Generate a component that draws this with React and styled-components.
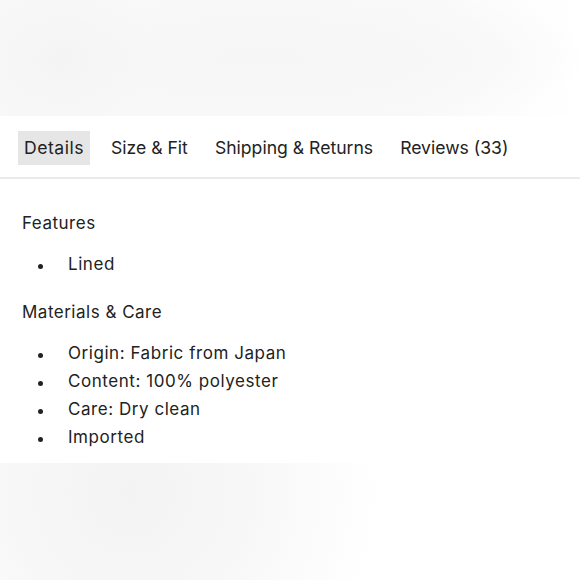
import React, { useState } from 'react'
import styled, { createGlobalStyle } from 'styled-components'

const GlobalStyle = createGlobalStyle`
  html, body {
    margin: 0;
    padding: 0;
    background: #ffffff;
  }
  body {
    font-family: Inter, "Liberation Sans", sans-serif;
    color: #222222;
  }
`

const Page = styled.div`
  width: 580px;
  height: 580px;
  display: flex;
  flex-direction: column;
  overflow: hidden;
`

const TopHaze = styled.div`
  height: 116px;
  flex-shrink: 0;
  background:
    radial-gradient(ellipse 90px 70px at 62px 60px, #f4f4f4 0%, rgba(246,246,246,0) 100%),
    radial-gradient(ellipse 330px 80px at 260px 58px, #f6f6f6 0%, #f8f8f8 60%, rgba(250,250,250,0) 100%),
    linear-gradient(90deg, #f8f8f8 0%, #f9f9f9 70%, #fdfdfd 90%, #ffffff 100%);
`

const Panel = styled.div`
  background: #ffffff;
  flex-shrink: 0;
`

const TabBar = styled.div`
  display: flex;
  align-items: center;
  gap: 15px;
  padding: 15px 18px 12px;
  border-bottom: 2px solid #ebebeb;
`

const Tab = styled.button`
  border: none;
  font-family: inherit;
  font-size: 17.6px;
  letter-spacing: ${p => (p.$active ? '0.5px' : '0')};
  line-height: 34px;
  height: 34px;
  padding: 0 6px;
  color: #222222;
  cursor: pointer;
  background: ${p => (p.$active ? '#e6e6e6' : 'transparent')};
`

const Content = styled.div`
  padding: 32px 22px 12px;
`

const SectionTitle = styled.div`
  font-size: 17px;
  letter-spacing: 0.5px;
  line-height: 24px;
  margin-bottom: 15px;
`

const List = styled.ul`
  list-style: none;
  margin: 0 0 22px;
  padding: 0;
`

const Section = styled.div`
  &:last-child ${List} {
    margin-bottom: 0;
  }
`

const Item = styled.li`
  font-size: 17px;
  letter-spacing: 0.55px;
  line-height: 28px;
  padding-left: 46px;
  position: relative;

  &::before {
    content: '';
    position: absolute;
    left: 16px;
    top: 14px;
    width: 5px;
    height: 5px;
    border-radius: 50%;
    background: #222222;
  }
`

const BottomHaze = styled.div`
  flex: 1;
  background:
    radial-gradient(circle 250px at 130px 30px, #f3f3f3 0%, #f7f7f7 45%, rgba(255,255,255,0) 100%),
    #ffffff;
`

const tabs = ['Details', 'Size & Fit', 'Shipping & Returns', 'Reviews (33)']

const sections = [
  { title: 'Features', items: ['Lined'] },
  {
    title: 'Materials & Care',
    items: ['Origin: Fabric from Japan', 'Content: 100% polyester', 'Care: Dry clean', 'Imported'],
  },
]

export default function App() {
  const [active, setActive] = useState(0)
  return (
    <Page>
      <GlobalStyle />
      <TopHaze />
      <Panel>
        <TabBar>
          {tabs.map((t, i) => (
            <Tab key={t} $active={i === active} onClick={() => setActive(i)}>
              {t}
            </Tab>
          ))}
        </TabBar>
        <Content>
          {sections.map(s => (
            <Section key={s.title}>
              <SectionTitle>{s.title}</SectionTitle>
              <List>
                {s.items.map(it => (
                  <Item key={it}>{it}</Item>
                ))}
              </List>
            </Section>
          ))}
        </Content>
      </Panel>
      <BottomHaze />
    </Page>
  )
}
